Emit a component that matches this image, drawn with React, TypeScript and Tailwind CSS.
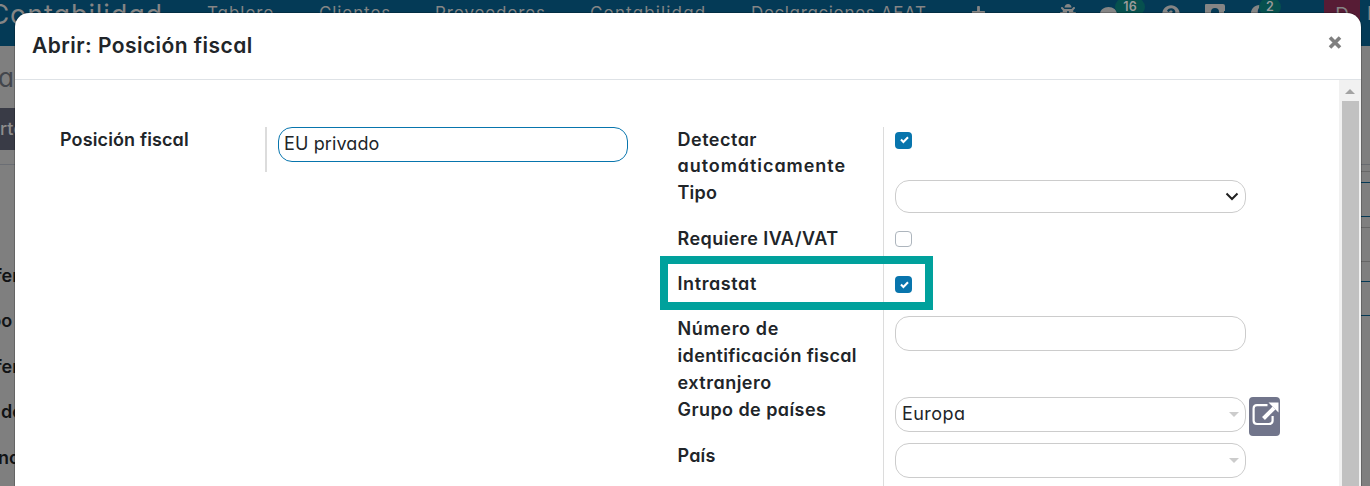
import React from 'react';
import { FaBug, FaComment, FaPlus, FaQuestionCircle, FaMoon } from 'react-icons/fa';

const menu = [
  { text: 'Tablero', cls: 'w-[112px] tracking-[0.95px]' },
  { text: 'Clientes', cls: 'w-[116px] tracking-[0.9px]' },
  { text: 'Proveedores', cls: 'w-[155px] tracking-[0.85px]' },
  { text: 'Contabilidad', cls: 'w-[161px] tracking-[1.15px]' },
  { text: 'Declaraciones AEAT', cls: 'w-[220px] tracking-[0.65px]' },
];

function Navbar() {
  return (
    <div className="flex h-[46px] items-start overflow-hidden bg-[#043a56] text-[#858585]">
      <div className="flex w-[207px] shrink-0 justify-end pr-[44px]">
        <span className="whitespace-nowrap text-[27px] leading-[29px] tracking-[0.9px]">Contabilidad</span>
      </div>
      {menu.map((m) => (
        <div key={m.text} className={`shrink-0 whitespace-nowrap text-[17px] leading-[27px] ${m.cls}`}>{m.text}</div>
      ))}
      <div className="w-[89px] shrink-0 pt-[5px]"><FaPlus size={15} /></div>
      <div className="w-[40px] shrink-0 pt-[4px]"><FaBug size={16} /></div>
      <div className="flex w-[62px] shrink-0">
        <div className="pt-[6px]"><FaComment size={17} /></div>
        <div className="-ml-[2px] h-[18px] w-[30px] -translate-y-[2px] rounded-full bg-[#06504e] text-center text-[12.5px] font-semibold leading-[18px] text-[#9a9a9a]">16</div>
      </div>
      <div className="w-[43px] shrink-0 pt-[5px]"><FaQuestionCircle size={18} /></div>
      <div className="w-[45px] shrink-0 pt-[4px]">
        <svg width="20" height="20" viewBox="0 0 20 20" fill="currentColor"><path d="M1 0h17q2 0 2 2v5h-1v12H0V1q0-1 1-1zm9 4a4 4 0 0 0-4 4v3h8V8a4 4 0 0 0-4-4z" fillRule="evenodd" /></svg>
      </div>
      <div className="flex w-[74px] shrink-0">
        <div className="pt-[5px]"><FaMoon size={17} /></div>
        <div className="-ml-[8px] h-[18px] w-[22px] -translate-y-[2px] rounded-full bg-[#06504e] text-center text-[12.5px] font-semibold leading-[18px] text-[#9a9a9a]">2</div>
      </div>
      <div className="h-[46px] w-[36px] shrink-0 bg-[#571c35] text-center text-[19px] leading-[30px]">D</div>
      <div className="shrink-0 pl-[7px] text-[18px] leading-[28px]">D</div>
    </div>
  );
}

function Backdrop() {
  return (
    <div className="h-[486px] bg-[#7f7f7f]">
      <Navbar />
      <div className="flex h-[440px] justify-between">
        <div className="w-[15px] overflow-hidden whitespace-nowrap text-[18px] font-[560] text-[#111315]">
          <div className="h-[62px] pt-[14px] text-[26px] font-normal leading-[36px] text-[#43464c]"><span className="-ml-[2px]">a</span></div>
          <div className="h-[42px] bg-[#393b46] font-medium leading-[42px] text-[#8d8d8d]">rtes</div>
          <div className="mt-[14px] h-[98px] border-t border-[#6b6e74]" />
          <div className="h-[45px] leading-[27px]"><span className="-ml-[5px]">ferencia</span></div>
          <div className="h-[46px] leading-[27px]"><span className="-ml-[10px]">po</span></div>
          <div className="h-[45px] leading-[27px]"><span className="-ml-[5px]">ferencia</span></div>
          <div className="h-[46px] leading-[27px]"><span className="ml-px">do</span></div>
          <div className="h-[45px] leading-[27px]"><span className="-ml-[2px]">nc</span></div>
        </div>
        <div className="w-[10px] pt-[118px]">
          <div className="h-[7px] border-t border-[#686b70]" />
          <div className="h-[11px] border-t border-[#686868]" />
          <div className="h-[35px] border-y border-[#043a56]" />
          <div className="mt-[10px] h-[35px] border-y border-[#666]" />
          <div className="mt-[19px] h-[35px] border-y border-[#043a56]" />
        </div>
      </div>
    </div>
  );
}

function Checkbox({ checked = false }: { checked?: boolean }) {
  return checked ? (
    <span className="flex h-[17px] w-[17px] items-center justify-center rounded-[4px] bg-[#0875ad]">
      <svg width="9" height="8" viewBox="0 0 9 8" fill="none" className="ml-px"><path d="M1 3.6L3.4 6L8 1.3" stroke="white" strokeWidth="2.1" /></svg>
    </span>
  ) : (
    <span className="block h-[16px] w-[17px] rounded-[4px] border border-[#adb5bd] bg-white" />
  );
}

function Row({ h, label, children }: { h: string; label: React.ReactNode; children?: React.ReactNode }) {
  return (
    <div className={`flex ${h}`}>
      <div className="w-[206px] shrink-0 whitespace-nowrap border-r border-[#dcdcdc] text-[18px] font-[560] leading-[27px]"><div className="-ml-[0.5px] -mt-px">{label}</div></div>
      <div className="flex items-start pl-[11px]">{children}</div>
    </div>
  );
}

const field = 'flex w-[351px] items-center rounded-[14px] border border-[#ccc] bg-white';

function Caret() {
  return <span className="mr-[6px] h-0 w-0 border-x-[5px] border-t-[5px] border-x-transparent border-t-[#ccc]" />;
}

function Modal() {
  return (
    <div className="flex h-[500px] w-[1346px] flex-col overflow-hidden rounded-t-[14px] bg-white text-[#212529] shadow-[0_0_0_1px_rgba(0,0,0,0.2)]">
      <div className="flex h-[67px] shrink-0 items-center justify-between border-b border-[#dee2e6] pl-[17px] pr-[19px]">
        <h1 className="text-[21px] font-[560] leading-[32px] tracking-[0.45px]">Abrir: Posición fiscal</h1>
        <svg width="14" height="13" viewBox="0 0 14 13" className="-translate-y-[4px]"><path d="M2 1.5l10 10M12 1.5l-10 10" stroke="#7f7f7f" strokeWidth="3.6" /></svg>
      </div>
      <div className="flex grow">
        <div className="flex grow items-start pl-[45px] pt-[47px]">
          <div className="flex h-[45px] w-[618px] shrink-0">
            <div className="w-[207px] shrink-0 border-r-2 border-[#dcdcdc] text-[18px] font-[560] leading-[27px] tracking-[0.13px]"><div className="-mt-px">Posición fiscal</div></div>
            <div className="pl-[11px]">
              <div className="flex h-[35px] w-[350px] items-center rounded-[14px] border border-[#0875ad] pb-[2px] pl-[5px] text-[18px] tracking-[0.12px]">EU privado</div>
            </div>
          </div>
          <div>
            <Row h="h-[53px]" label={<><div className="h-[26px] tracking-[0.5px]">Detectar</div><div className="tracking-[0.95px]">automáticamente</div></>}><span className="pt-[4.5px]"><Checkbox checked /></span></Row>
            <Row h="h-[46px]" label={<span className="tracking-[0.2px]">Tipo</span>}>
              <div className={`${field} h-[33px] justify-end`}>
                <svg width="14" height="9" viewBox="0 0 14 9" className="mr-[6px]" fill="none"><path d="M1.5 1.5L7 7l5.5-5.5" stroke="#202020" strokeWidth="2" /></svg>
              </div>
            </Row>
            <Row h="h-[45px]" label={<span className="tracking-[0.45px]">Requiere IVA/VAT</span>}><span className="pt-[5px]"><Checkbox /></span></Row>
            <Row h="h-[45px]" label={<span className="tracking-[0.6px]">Intrastat</span>}><span className="pt-[5px]"><Checkbox checked /></span></Row>
            <Row h="h-[81px]" label={<><div className="tracking-[0.65px]">Número de</div><div className="tracking-[0.35px]">identificación fiscal</div><div className="tracking-[0.5px]">extranjero</div></>}>
              <div className={`${field} h-[35px]`} />
            </Row>
            <Row h="h-[46px]" label={<span className="tracking-[0.43px]">Grupo de países</span>}>
              <div className={`${field} h-[35px] justify-between pl-[6px] text-[18px]`}><span className="pb-[2px] tracking-[0.45px]">Europa</span><Caret /></div>
              <div className="ml-[3px] flex h-[39px] w-[31px] justify-center rounded-[4px] bg-[#71758b] pt-[5px]">
                <svg width="28" height="24" viewBox="0 0 28 24" fill="none" stroke="white" strokeWidth="2.2">
                  <path d="M16.5 3.2H6Q2.6 3.2 2.6 6.6v12Q2.6 22 6 22h12q3.6 0 3.6-3.4V14" />
                  <path d="M12.5 16.5L23 6" strokeWidth="4" />
                  <path d="M17.5 0.5H27.5V10.5z" fill="white" stroke="none" />
                </svg>
              </div>
            </Row>
            <Row h="h-[60px]" label={<span className="tracking-[0.2px]">País</span>}><div className={`${field} h-[35px] justify-end`}><Caret /></div></Row>
          </div>
        </div>
        <div className="flex w-[22px] shrink-0 flex-col items-center bg-[#f1f1f1] pt-[9px]">
          <span className="h-0 w-0 border-x-[5px] border-b-[5px] border-x-transparent border-b-[#a3a3a3]" />
          <div className="mt-[7px] w-[17px] grow bg-[#c1c1c1]" />
        </div>
      </div>
    </div>
  );
}

export default function App() {
  return (
    <div className="relative h-[486px] w-[1370px] overflow-hidden font-['Inter',sans-serif] [font-feature-settings:'cv11']">
      <Backdrop />
      <div className="absolute inset-0 pl-[15px] pt-[13px]"><Modal /></div>
      <div className="absolute left-[660px] top-[256px] h-[54px] w-[273px] border-8 border-[#00a19c]" />
    </div>
  );
}
